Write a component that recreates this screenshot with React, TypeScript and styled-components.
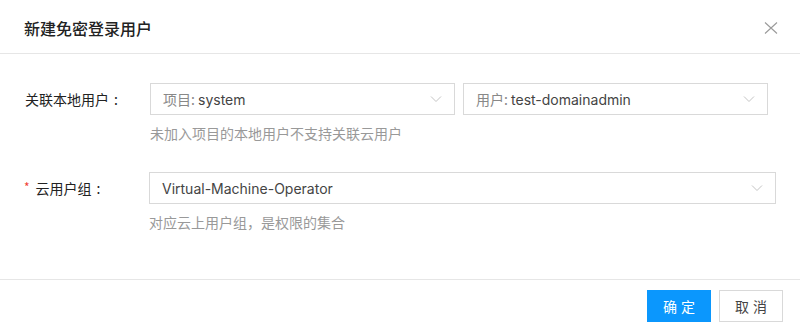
import styled, { createGlobalStyle } from 'styled-components';

const Global = createGlobalStyle`
  html, body {
    margin: 0;
    padding: 0;
    background: #ffffff;
  }
  body {
    font-family: Inter, "Noto Sans CJK SC", sans-serif;
    color: #333333;
  }
`;

const Dialog = styled.div`
  width: 800px;
  height: 331px;
  background: #ffffff;
  display: flex;
  flex-direction: column;
  overflow: hidden;
`;

const Header = styled.div`
  height: 54px;
  box-sizing: border-box;
  padding: 0 22px 0 24px;
  display: flex;
  align-items: center;
  justify-content: space-between;
  border-bottom: 1px solid #e6e6e6;
`;

const Title = styled.h2`
  margin: 0;
  font-family: "Noto Sans CJK SC", sans-serif;
  font-size: 16px;
  font-weight: 500;
  color: #222222;
  padding-top: 2px;
`;

const Close = styled.button`
  border: 0;
  background: none;
  padding: 0;
  width: 14px;
  height: 12px;
  display: flex;
  cursor: pointer;
  margin-top: 3px;
`;

const Body = styled.div`
  flex: 1;
  padding: 29px 24px 0 24px;
  display: flex;
  flex-direction: column;
  gap: 29px;
`;

const Row = styled.div`
  display: flex;
  align-items: flex-start;
`;

const Label = styled.label<{ $required?: boolean }>`
  width: 125px;
  flex-shrink: 0;
  height: 32px;
  display: flex;
  align-items: center;
  font-family: "Noto Sans CJK SC", sans-serif;
  font-size: 14px;
  color: #222222;
  padding-left: ${(p) => (p.$required ? '0' : '1px')};

  &::before {
    content: ${(p) => (p.$required ? "'*'" : 'none')};
    color: #f04134;
    font-size: 12px;
    margin-right: 6px;
    margin-top: -3px;
  }

  &::after {
    content: ':';
    margin-left: 5px;
  }
`;

const Field = styled.div`
  flex: 1;
  display: flex;
  flex-direction: column;
`;

const Selects = styled.div<{ $inset?: number }>`
  display: flex;
  gap: 8px;
  margin-right: ${(p) => p.$inset ?? 0}px;
`;

const Select = styled.div`
  flex: 1;
  height: 32px;
  box-sizing: border-box;
  border: 1px solid #d9d9d9;
  padding: 0 12px 0 12px;
  display: flex;
  align-items: center;
  justify-content: space-between;
  font-size: 14px;
  color: #444444;
  font-family: Inter, "Noto Sans CJK SC", sans-serif;
`;

const Prefix = styled.span`
  color: #888888;
  font-family: "Noto Sans CJK SC", sans-serif;
`;

const Help = styled.div`
  margin-top: 8px;
  line-height: 20px;
  font-size: 14px;
  color: #999999;
  font-family: "Noto Sans CJK SC", sans-serif;
`;

const Footer = styled.div`
  border-top: 1px solid #e6e6e6;
  padding: 10px 17px 0 0;
  height: 52px;
  box-sizing: border-box;
  display: flex;
  justify-content: flex-end;
  gap: 8px;
`;

const Button = styled.button<{ $primary?: boolean }>`
  height: 32px;
  width: 64px;
  box-sizing: border-box;
  border: 1px solid ${(p) => (p.$primary ? '#0b97fd' : '#d9d9d9')};
  background: ${(p) => (p.$primary ? '#0b97fd' : '#ffffff')};
  color: ${(p) => (p.$primary ? '#ffffff' : '#444444')};
  font-family: "Noto Sans CJK SC", sans-serif;
  font-size: 14px;
  letter-spacing: 4px;
  padding: 0 0 0 4px;
  cursor: pointer;
`;

const Chevron = () => (
  <svg width="12" height="8" viewBox="0 0 12 8" fill="none">
    <path d="M1 1.5 L6 6.5 L11 1.5" stroke="#c4c4c4" strokeWidth="1" />
  </svg>
);

export default function App() {
  return (
    <>
      <Global />
      <Dialog>
        <Header>
          <Title>新建免密登录用户</Title>
          <Close aria-label="close">
            <svg width="14" height="12" viewBox="0 0 14 12">
              <path d="M1 0.5 L13 11.5 M13 0.5 L1 11.5" stroke="#9a9a9a" strokeWidth="1.1" />
            </svg>
          </Close>
        </Header>
        <Body>
          <Row>
            <Label>关联本地用户</Label>
            <Field>
              <Selects $inset={8}>
                <Select>
                  <span>
                    <Prefix>项目: </Prefix>system
                  </span>
                  <Chevron />
                </Select>
                <Select>
                  <span>
                    <Prefix>用户: </Prefix>test-domainadmin
                  </span>
                  <Chevron />
                </Select>
              </Selects>
              <Help>未加入项目的本地用户不支持关联云用户</Help>
            </Field>
          </Row>
          <Row>
            <Label $required>云用户组</Label>
            <Field>
              <Selects>
                <Select>
                  <span>Virtual-Machine-Operator</span>
                  <Chevron />
                </Select>
              </Selects>
              <Help>对应云上用户组，是权限的集合</Help>
            </Field>
          </Row>
        </Body>
        <Footer>
          <Button $primary>确定</Button>
          <Button>取消</Button>
        </Footer>
      </Dialog>
    </>
  );
}
